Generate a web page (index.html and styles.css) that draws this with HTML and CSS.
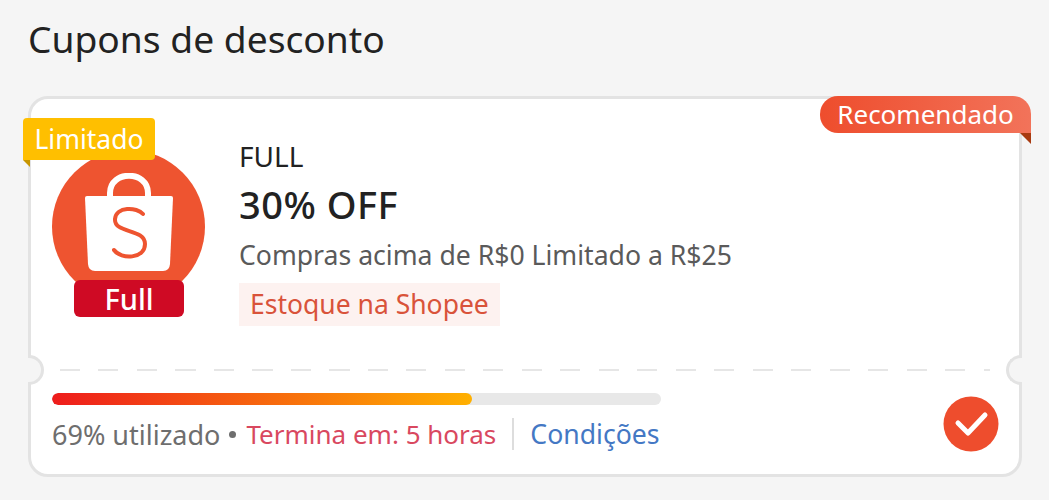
FILE: index.html
```html
<!DOCTYPE html>
<html lang="pt-BR">
<head>
    <meta charset="UTF-8">
    <title>Cupons de desconto</title>
    <link rel="stylesheet" href="styles.css">
</head>
<body>
    <h1 class="page-title">Cupons de desconto</h1>
    <div class="coupon">
        <div class="tag-limited">Limitado</div>
        <div class="tag-recommended">Recomendado</div>
        <div class="notch notch-left"></div>
        <div class="notch notch-right"></div>

        <div class="coupon-top">
            <div class="logo">
                <svg class="logo-bag" viewBox="0 0 88 100" width="88" height="100">
                    <path d="M25 26 V20 C25 -3 63 -3 63 20 V26" fill="none" stroke="#fff" stroke-width="6"/>
                    <path d="M2 23 H86 Q88 23 88 25 L85 91 Q84.500 98 78 98 H10 Q3.500 98 3 91 L0 25 Q0 23 2 23 Z" fill="#fff"/>
                    <path d="M58 41 C52 34 31 33 30 46 C29 61 60 55 60 71 C60 86 36 87 29 77" fill="none" stroke="#ee5430" stroke-width="4" stroke-linecap="round"/>
                </svg>
                <div class="logo-label">Full</div>
            </div>
            <div class="details">
                <div class="details-name">FULL</div>
                <div class="details-discount">30% OFF</div>
                <div class="details-rule">Compras acima de R$0 Limitado a R$25</div>
                <div class="details-stock">Estoque na Shopee</div>
            </div>
        </div>

        <div class="divider"></div>

        <div class="coupon-bottom">
            <div class="usage">
                <div class="bar"><div class="bar-fill" style="width: 69%"></div></div>
                <div class="usage-text">
                    <span class="used">69% utilizado</span>
                    <span class="dot"></span>
                    <span class="ends">Termina em: 5 horas</span>
                    <span class="sep"></span>
                    <span class="terms">Condições</span>
                </div>
            </div>
            <svg class="check" viewBox="0 0 56 56" width="56" height="56">
                <circle cx="28" cy="28" r="27.500" fill="#ee4d2d"/>
                <path d="M15 27 L25 37 L42 19" fill="none" stroke="#fff" stroke-width="5" stroke-linecap="round" stroke-linejoin="round"/>
            </svg>
        </div>
    </div>
</body>
</html>
```

FILE: styles.css
```css
body {
    margin: 0;
    padding: 0 27px 0 28px;
    height: 500px;
    box-sizing: border-box;
    overflow: hidden;
    background-color: #f5f5f5;
    color: #222;
    font-family: "Noto Sans", Arial, sans-serif;
}
.page-title {
    margin: 0;
    padding-top: 14px;
    height: 96px;
    box-sizing: border-box;
    font-size: 37.200px;
    line-height: 50px;
    font-weight: 400;
}
.coupon {
    position: relative;
    height: 381px;
    box-sizing: border-box;
    border: 3px solid #e3e3e3;
    border-radius: 20px;
    background-color: #fff;
}
.tag-limited {
    position: absolute;
    left: -8px;
    top: 19px;
    width: 132px;
    height: 42px;
    border-radius: 4px 4px 4px 0;
    background-color: #ffbf00;
    color: #fff;
    font-size: 26.500px;
    line-height: 42px;
    text-align: center;
    z-index: 2;
}
.tag-limited::after {
    content: "";
    position: absolute;
    left: 0;
    top: 42px;
    border-top: 7px solid #c79500;
    border-left: 7px solid transparent;
}
.tag-recommended {
    position: absolute;
    right: -12px;
    top: -3px;
    width: 211px;
    height: 37px;
    border-radius: 18px 18px 0 18px;
    background: linear-gradient(90deg, #ee4d2d, #f2735a);
    color: #fff;
    font-size: 26px;
    line-height: 37px;
    text-align: center;
}
.tag-recommended::after {
    content: "";
    position: absolute;
    right: 0;
    top: 37px;
    border-top: 11px solid #a83a10;
    border-left: 11px solid transparent;
}
.notch {
    position: absolute;
    top: 256px;
    width: 13px;
    height: 24px;
    background-color: #f5f5f5;
    border: 3px solid #e3e3e3;
}
.notch-left {
    left: -3px;
    border-left: 0;
    border-radius: 0 15px 15px 0;
}
.notch-right {
    right: -3px;
    border-right: 0;
    border-radius: 15px 0 0 15px;
}
.coupon-top {
    display: flex;
    height: 270px;
    box-sizing: border-box;
    padding: 51px 0 0 21px;
    gap: 34px;
}
.logo {
    position: relative;
    width: 153px;
    height: 153px;
    flex-shrink: 0;
    border-radius: 50%;
    background-color: #ee5430;
}
.logo-bag {
    display: block;
    margin: 23px 0 0 33px;
}
.logo-label {
    position: absolute;
    left: 22px;
    top: 130px;
    width: 110px;
    height: 37px;
    border-radius: 6px;
    background-color: #cf0a24;
    color: #fff;
    font-size: 29px;
    font-weight: 500;
    line-height: 37px;
    text-align: center;
}
.details {
    display: flex;
    flex-direction: column;
    align-items: flex-start;
    margin-top: -12px;
}
.details-name {
    font-size: 28px;
    line-height: 36px;
}
.details-discount {
    font-size: 38px;
    font-weight: 500;
    letter-spacing: 0.500px;
    line-height: 50px;
    margin-top: 5px;
}
.details-rule {
    font-size: 26.600px;
    line-height: 36px;
    margin-top: 8px;
    color: #5a5a5a;
}
.details-stock {
    margin-top: 10px;
    padding: 0 11px;
    height: 43px;
    background-color: #fdf2f0;
    color: #d9533a;
    font-size: 26.500px;
    line-height: 43px;
}
.divider {
    margin: 0 29px;
    height: 2px;
    background: repeating-linear-gradient(90deg, #e6e6e6 0, #e6e6e6 20px, transparent 20px, transparent 38.500px);
}
.coupon-bottom {
    display: flex;
    align-items: flex-start;
    justify-content: space-between;
    padding: 22px 20px 0 21px;
}
.usage {
    width: 609px;
}
.bar {
    height: 12px;
    border-radius: 6px;
    background-color: #e8e8e8;
    overflow: hidden;
}
.bar-fill {
    height: 100%;
    border-radius: 6px;
    background: linear-gradient(90deg, #ee1c1c, #ffb000);
}
.usage-text {
    display: flex;
    align-items: center;
    margin-top: 10px;
    height: 38px;
    font-size: 26.600px;
    white-space: nowrap;
}
.used {
    font-size: 27px;
    color: #6e6e6e;
}
.dot {
    width: 7px;
    height: 7px;
    margin: 0 10px 0 9px;
    border-radius: 50%;
    background-color: #6e6e6e;
}
.ends {
    font-size: 26px;
    color: #d9485f;
}
.sep {
    width: 2px;
    height: 32px;
    margin: 0 16px;
    background-color: #ddd;
}
.terms {
    color: #4478c4;
}
.check {
    display: block;
    margin-top: 3px;
}
```
